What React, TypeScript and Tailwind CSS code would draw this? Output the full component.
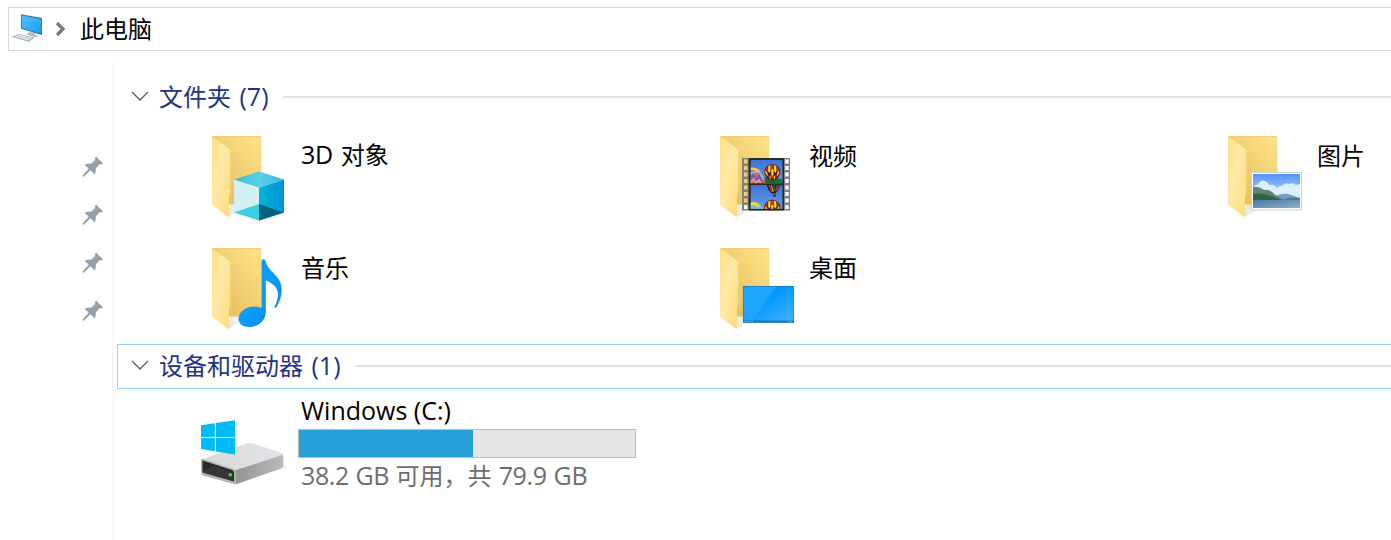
import React from 'react';

interface FolderItem {
  name: React.ReactNode;
  Overlay: React.FC;
}

const FolderBase: React.FC<{ id: string }> = ({ id }) => (
  <>
    <defs>
      <linearGradient id={`${id}-back`} x1="0" y1="1" x2="1" y2="0">
        <stop offset="0.2" stopColor="#e8c260" />
        <stop offset="1" stopColor="#ffe48a" />
      </linearGradient>
      <linearGradient id={`${id}-front`} x1="0" y1="0" x2="1" y2="1">
        <stop offset="0" stopColor="#fddf86" />
        <stop offset="0.45" stopColor="#ffe9a6" />
        <stop offset="1" stopColor="#fbdc7b" />
      </linearGradient>
      <linearGradient id={`${id}-shadow`} x1="0" y1="0" x2="1" y2="0">
        <stop offset="0" stopColor="#000" stopOpacity="0.1" />
        <stop offset="1" stopColor="#000" stopOpacity="0" />
      </linearGradient>
    </defs>
    <path d="M28 92L36 88L44 84L50 79L30 79Z" fill={`url(#${id}-shadow)`} />
    <path d="M12 11H60.5Q61.5 11 61.5 12V79.500H12Z" fill={`url(#${id}-back)`} />
    <path d="M12 11L29.300 24Q30.300 25 30.300 26V67Q30.300 69 29 70.500V91Q29 92.500 27.500 91.500L12.500 80Q12 79.500 12 79Z" fill={`url(#${id}-front)`} />
    <path d="M12 11.500H61" stroke="#e9cb74" strokeWidth="0.700" />
  </>
);

const CubeOverlay: React.FC = () => (
  <g>
    <defs>
      <linearGradient id="cube-r" x1="0" y1="0" x2="1" y2="0">
        <stop offset="0" stopColor="#00b7d4" />
        <stop offset="1" stopColor="#0091dc" />
      </linearGradient>
      <linearGradient id="cube-t" x1="0" y1="0" x2="1" y2="0">
        <stop offset="0" stopColor="#35bdd2" />
        <stop offset="0.500" stopColor="#58d0e6" />
        <stop offset="1" stopColor="#35b6dc" />
      </linearGradient>
    </defs>
    <path d="M70 92L90 85L84 82Z" fill="#000" opacity="0.060" />
    <path d="M34 54.500L59 62.500V95.500L34 87.500Z" fill="#d3f1f5" />
    <path d="M59 62.500L84 54.500V87.500L59 95.500Z" fill="url(#cube-r)" />
    <path d="M34 54.500L59 46.500L84 54.500L59 62.500Z" fill="url(#cube-t)" />
    <path d="M34 87.500L59 79V95.500Z" fill="#3dd0e0" />
    <path d="M59 79L84 87.500L59 95.500Z" fill="#00627f" />
  </g>
);

const Balloon: React.FC<{ y: number }> = ({ y }) => (
  <g transform={`translate(64.300 ${y})`}>
    <path d="M-8 7.500A8 7.800 0 0 1 8 7.500Q8 11 3 15.500H-3Q-8 11 -8 7.500Z" fill="#431018" />
    <path d="M-7.300 7Q-6.500 3 -4.500 1.800Q-5.500 8 -3.500 13Q-7 10 -7.300 7ZM7.300 7Q6.500 3 4.500 1.800Q5.500 8 3.500 13Q7 10 7.300 7ZM-1.600 0.400H1.600V14H-1.600Z" fill="#d52a1c" />
    <path d="M-4 1.500L-1.800 0.600V6.500L-3 8.500L-4.300 6.500ZM4 1.500L1.800 0.600V6.500L3 8.500L4.300 6.500ZM-1 5H1V10L0 11.500L-1 10ZM-6.900 6L-5 8.500L-4.500 12L-7 8.500ZM6.900 6L5 8.500L4.500 12L7 8.500ZM-3.200 10.500L-1.700 12V15H-2.500ZM3.200 10.500L1.700 12V15H2.500Z" fill="#fbdc26" />
    <rect x="-1.400" y="16" width="2.800" height="2.200" fill="#5b3a1f" />
  </g>
);

const FilmOverlay: React.FC = () => (
  <g>
    <defs>
      <linearGradient id="film-sky" x1="0" y1="0" x2="0" y2="1">
        <stop offset="0" stopColor="#3d74d6" />
        <stop offset="1" stopColor="#6a9ce8" />
      </linearGradient>
      <clipPath id="film-a"><rect x="42.700" y="35" width="31.700" height="23.300" /></clipPath>
      <clipPath id="film-b"><rect x="42.700" y="60" width="31.700" height="23.700" /></clipPath>
    </defs>
    <path d="M34 33H82V85.500H34Z" fill="#808080" />
    <path d="M40.700 33H76V85.500H40.700Z" fill="#292929" />
    {[34.5, 41, 47.5, 54, 60.5, 67, 73.5, 80].map((y, i) => (
      <g key={y}>
        <rect x="36" y={y} width="3.500" height="4" fill={i < 7 ? '#f2cd6c' : '#fff'} />
        <rect x="77.200" y={y} width="3.500" height="4" fill="#fff" />
      </g>
    ))}
    <g clipPath="url(#film-a)">
      <rect x="42" y="35" width="33" height="24" fill="url(#film-sky)" />
      <path d="M42 53Q58 51 75 54V59H42Z" fill="#12703e" />
      <path d="M42 46Q50 43 56 51L57 58H42Z" fill="#e1604f" />
      <path d="M42 44Q48 43 51.500 47.500" stroke="#f7d43b" strokeWidth="2.500" fill="none" />
      <path d="M42 49Q48 45 52 48L56 55" stroke="#86b7ea" strokeWidth="2" fill="none" />
      <path d="M42 55L45 50L48.500 55L51 51L54 58" stroke="#5f5fc9" strokeWidth="1.800" fill="none" />
      <path d="M42 58L46 54L48 58L51 55L53 58" stroke="#f3a199" strokeWidth="1.500" fill="none" />
      <Balloon y={39.5} />
    </g>
    <g clipPath="url(#film-b)">
      <rect x="42" y="60" width="33" height="24" fill="url(#film-sky)" />
      <path d="M58.500 60H73Q71 65 67.500 68.500H63.500Q60 65 58.500 60Z" fill="#2c1524" />
      <path d="M61 60L64 67M71.500 60L68.500 66" stroke="#d33b24" strokeWidth="1.400" />
      <path d="M63.500 60L65.200 67" stroke="#e8be20" strokeWidth="1" />
      <path d="M66.200 60V66" stroke="#2d8f55" strokeWidth="1" />
      <path d="M69 60L67.500 66" stroke="#3c55c0" strokeWidth="1" />
      <rect x="65" y="69.500" width="2.800" height="2.200" fill="#5b2c1c" />
      <path d="M42 79Q51 76 56 84H42Z" fill="#79c2d0" />
      <path d="M42 79Q48 77 51 81.500" stroke="#f7d43b" strokeWidth="2.500" fill="none" />
      <Balloon y={75} />
    </g>
  </g>
);

const PhotoOverlay: React.FC = () => (
  <g>
    <defs>
      <linearGradient id="photo-sky" x1="0" y1="0" x2="0" y2="1">
        <stop offset="0" stopColor="#5793f5" />
        <stop offset="0.600" stopColor="#a9d1fc" />
      </linearGradient>
      <linearGradient id="photo-water" x1="0" y1="0" x2="1" y2="1">
        <stop offset="0" stopColor="#4679a8" />
        <stop offset="1" stopColor="#8fb0ca" />
      </linearGradient>
      <clipPath id="photo-clip"><rect x="37" y="49" width="47" height="34" /></clipPath>
    </defs>
    <rect x="35.500" y="47.500" width="50" height="37.500" fill="#fff" stroke="#cfcfcf" />
    <g clipPath="url(#photo-clip)">
      <rect x="37" y="49" width="47" height="34" fill="url(#photo-sky)" />
      <path d="M37 63Q39 59 42 60Q44 54 49 56Q52 57 53 60Q58 59 61 63Q64 60 66 61Q69 57 73 59Q77 57 80 60L84 59V76H37Z" fill="#dceffc" />
      <path d="M58 72Q65 68 72 69Q78 71 84 73V77H55Z" fill="#6f9dca" />
      <path d="M37 62Q43 61 48 65Q54 64 58 69Q64 73 69 75L37 76Z" fill="#5b8476" />
      <path d="M37 69Q44 67 52 70Q61 73 66 75H37Z" fill="#2e6344" />
      <path d="M65 76Q73 71 84 73V77H65Z" fill="#517978" />
      <rect x="37" y="75" width="47" height="8" fill="url(#photo-water)" />
    </g>
  </g>
);

const NoteOverlay: React.FC = () => (
  <g>
    <defs>
      <linearGradient id="note" x1="0" y1="0" x2="1" y2="1">
        <stop offset="0" stopColor="#0a94f5" />
        <stop offset="0.500" stopColor="#0a9dff" />
        <stop offset="1" stopColor="#0b83dc" />
      </linearGradient>
    </defs>
    <path d="M61.500 24.500Q61.500 22.300 63.500 22.300Q65.500 22.300 66 25C67.500 32.500 74 35 78.500 42C82.500 48 83.500 58 77 69.500Q75.500 71.500 74.500 70C78.500 61 80 55 74.500 49C71 45.500 68 44 65.800 43.500V75C65.800 83 59 89.800 49.500 90C43 90 38.500 87 38.500 82C38.500 75 46 69.500 54 69.500Q59 69.500 61.500 71Z" fill="url(#note)" />
  </g>
);

const DesktopOverlay: React.FC = () => (
  <g>
    <defs>
      <linearGradient id="desk" x1="0" y1="0" x2="1" y2="1">
        <stop offset="0.400" stopColor="#0099ff" />
        <stop offset="1" stopColor="#45b4ff" />
      </linearGradient>
    </defs>
    <rect x="35" y="49" width="51" height="36.500" fill="url(#desk)" />
    <path d="M35 49H69L44 84H35Z" fill="#1ea6ff" />
    <rect x="35" y="83.500" width="51" height="2" fill="#1879bd" />
    <path d="M36 84.500H46M80 84.500H85" stroke="#84c8f2" strokeWidth="0.800" strokeDasharray="1.500 1" />
    <rect x="35.300" y="49.300" width="50.400" height="36" fill="none" stroke="#2376ac" strokeWidth="0.700" />
  </g>
);

const folders: FolderItem[] = [
  { name: <><span className="text-[25px] tracking-[-0.4px] [word-spacing:2px]">3D </span>对象</>, Overlay: CubeOverlay },
  { name: '视频', Overlay: FilmOverlay },
  { name: '图片', Overlay: PhotoOverlay },
  { name: '音乐', Overlay: NoteOverlay },
  { name: '桌面', Overlay: DesktopOverlay },
];

const ComputerIcon: React.FC = () => (
  <svg width="32" height="30" viewBox="0 0 32 30" className="shrink-0">
    <defs>
      <linearGradient id="screen" x1="0" y1="0" x2="1" y2="1">
        <stop offset="0" stopColor="#56c2ff" />
        <stop offset="0.500" stopColor="#35adfb" />
        <stop offset="1" stopColor="#1599f5" />
      </linearGradient>
    </defs>
    <path d="M19 18L24 19V21L28 22.200L24 23.200L15 20.500Z" fill="#b3bdc4" />
    <path d="M10 0.300L31 4V21L10 14.800Z" fill="#3f6f91" />
    <path d="M10.800 1.400L30.200 4.900V19.700L10.800 14.100Z" fill="url(#screen)" />
    <path d="M1 22.500L8 19.800L23 23.500L18 27.500Z" fill="#b9c1c7" />
    <path d="M4 22.200L19 26.300M6.500 21L21 24.800M5 23.500L11 20.800M9 24.600L15 21.800M13 25.700L19 22.800" stroke="#f1f3f5" strokeWidth="0.700" />
    <path d="M1 22.500L18 27.500L23 23.500" stroke="#8d969c" strokeWidth="0.600" fill="none" />
  </svg>
);

const PinIcon: React.FC = () => (
  <svg width="22" height="22" viewBox="0 0 22 22">
    <path d="M14 0.800L20.800 7.400L19.300 8.300L17.600 7.900L13.600 12.200Q14.200 15.500 12.700 18.200L8.500 14L1.800 20.500H0.900V19.500L7 12.600L2.800 8.900Q5.500 7.300 9 7.900L13.500 3.900L12.900 2Z" fill="#95a0a6" stroke="#95a0a6" strokeWidth="0.500" />
  </svg>
);

const DriveIcon: React.FC = () => (
  <svg width="100" height="100" viewBox="0 0 100 100" className="shrink-0">
    <defs>
      <linearGradient id="drive-top" x1="0" y1="0" x2="1" y2="0">
        <stop offset="0" stopColor="#d8d8da" />
        <stop offset="1" stopColor="#e4e4e8" />
      </linearGradient>
      <linearGradient id="drive-side" x1="0" y1="0" x2="1" y2="0">
        <stop offset="0" stopColor="#949494" />
        <stop offset="1" stopColor="#bababc" />
      </linearGradient>
    </defs>
    <path d="M60 84L99 72L93 70Z" fill="#000" opacity="0.060" />
    <path d="M11 64.500L57 48.500Q60 47.500 63 48.500L92 58Q94 59 92 60.500L46 76Z" fill="url(#drive-top)" />
    <path d="M45 75.500L92 60Q93.300 59.500 93.300 61V71Q93.300 72.500 92 73L47 89L44 88Z" fill="url(#drive-side)" />
    <path d="M11 65Q11 63.500 13 64L44 74Q46 75 46 77V88Q46 89.500 44 89L13 80.500Q11 80 11 78Z" fill="#b4b4b4" />
    <path d="M12.500 65.500L42 75Q44 76 44 77.500V86.500L14 78Q12.500 77.500 12.500 76.500Z" fill="#292929" />
    <path d="M14 75L24 71L43 78V86L14 78Z" fill="#444" opacity="0.500" />
    <circle cx="40.300" cy="79.700" r="1.800" fill="#2ee636" />
    <path d="M11 30.300L24.800 28.200V42H11ZM25.800 28L45 25.200V42H25.800ZM11 43H24.800V56.300L11 54ZM25.800 43H45V59.500L25.800 56.500Z" fill="#00bcf2" />
  </svg>
);

const Section: React.FC<{ title: string; count: string; active?: boolean }> = ({ title, count, active }) => (
  <div className={`flex h-[45px] items-center border border-r-0 pb-[2px] pl-[13px] ${active ? 'border-[#99d1ff]' : 'border-transparent'}`}>
    <svg width="18" height="12" viewBox="0 0 18 12" className="mr-[10px] mb-[2px] shrink-0">
      <path d="M1 2L9 10L17 2" fill="none" stroke="#606060" strokeWidth="1.400" />
    </svg>
    <span className="shrink-0 text-[#1e3287]">
      {title}<span className="text-[25px] [word-spacing:2px]"> {count}</span>
    </span>
    <div className="ml-[14px] h-[2px] flex-1 bg-[#e2e2e2]" />
  </div>
);

const App: React.FC = () => (
  <div className="flex h-[540px] w-[1391px] flex-col overflow-hidden bg-white pt-[7px] font-['Open_Sans','Noto_Sans_CJK_SC',sans-serif] text-[24px] leading-[32px] whitespace-nowrap text-black">
    <header className="ml-2 flex h-11 shrink-0 items-center border border-r-0 border-[#d9d9d9] pl-[2px]">
      <ComputerIcon />
      <svg width="12" height="16" viewBox="0 0 12 16" className="mr-[13px] ml-[12px] shrink-0">
        <path d="M2 2L8 8L2 14" fill="none" stroke="#777" strokeWidth="3.200" />
      </svg>
      <span>此电脑</span>
    </header>

    <div className="mt-3 flex min-h-0 flex-1">
      <aside className="flex w-[114px] shrink-0 flex-col items-end gap-[26px] border-r-2 border-[#f7f7f7] pt-[93px] pr-2">
        {[0, 1, 2, 3].map(i => <PinIcon key={i} />)}
      </aside>

      <main className="min-w-0 flex-1 overflow-hidden pt-3 pl-[3px]">
        <Section title="文件夹" count="(7)" />
        <div className="grid grid-cols-[508px_508px_508px] pl-[83px]">
          {folders.map(({ name, Overlay }, i) => (
            <div key={i} className="flex h-28 items-start">
              <svg width="100" height="112" viewBox="0 -5 100 112" className="shrink-0">
                <FolderBase id={`folder-${i}`} />
                <Overlay />
              </svg>
              <span className={i === 0 ? 'mt-[18px] ml-px' : 'mt-5 ml-px'}>{name}</span>
            </div>
          ))}
        </div>

        <Section title="设备和驱动器" count="(1)" active />
        <div className="flex pt-[6px] pl-[73px]">
          <DriveIcon />
          <div className="-mt-px ml-2">
            <div className="h-8 pl-[3px] text-[25px]">Windows (C:)</div>
            <div className="mt-[3px] h-[29px] w-[338px] border border-[#bcbcbc] bg-[#e6e6e6]">
              <div className="h-full w-[174px] bg-[#26a0da]" />
            </div>
            <div className="mt-px pl-[3px] text-[#6d6d6d]">
              <span className="text-[25px] tracking-[-0.4px] [word-spacing:0.5px]">38.2 GB </span>可用，共<span className="text-[25px] tracking-[-0.4px] [word-spacing:1px]"> 79.9 GB</span>
            </div>
          </div>
        </div>
      </main>
    </div>
  </div>
);

export default App;
